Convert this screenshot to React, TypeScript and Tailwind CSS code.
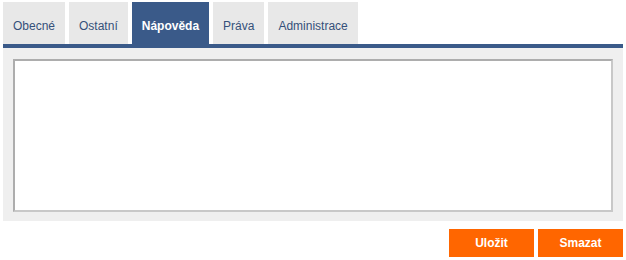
import React from "react";

const tabs = ["Obecné", "Ostatní", "Nápověda", "Práva", "Administrace"];

export default function App() {
  return (
    <div
      className="w-[626px] h-[260px] bg-white pl-[3px] pr-[3px] pt-[2px]"
      style={{ fontFamily: '"Liberation Sans", Arial, sans-serif' }}
    >
      <div className="flex gap-[4px] h-[42px]">
        {tabs.map((t) =>
          t === "Nápověda" ? (
            <div
              key={t}
              className="flex items-center px-[10px] pt-[5px] bg-[#3a5a89] text-white font-bold text-[12px]"
            >
              {t}
            </div>
          ) : (
            <div
              key={t}
              className="flex items-center px-[10px] pt-[5px] bg-[#e8e8e8] text-[#35507a] text-[12px]"
            >
              {t}
            </div>
          )
        )}
      </div>
      <div className="h-[4px] bg-[#3a5a89]" />
      <div className="bg-[#efefef] pl-[10px] pr-[10px] pt-[11px] pb-[9px]">
        <textarea className="block w-full h-[153px] bg-white border-2 border-t-[#adadad] border-l-[#adadad] border-r-[#c8c8c8] border-b-[#c8c8c8] resize-none outline-none" />
      </div>
      <div className="flex justify-end gap-[4px] mt-[8px]">
        <button className="w-[85px] h-[28px] bg-[#ff6600] text-white font-bold text-[12px]">
          Uložit
        </button>
        <button className="w-[85px] h-[28px] bg-[#ff6600] text-white font-bold text-[12px]">
          Smazat
        </button>
      </div>
    </div>
  );
}
